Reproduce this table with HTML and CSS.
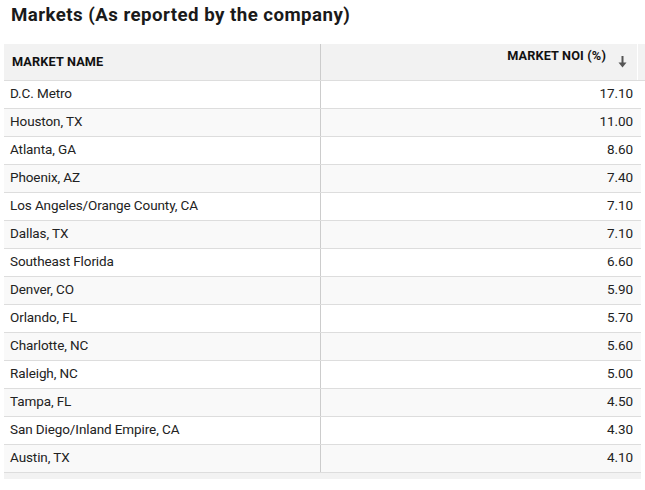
FILE: index.html
```html
<!DOCTYPE html>
<html>
<head>
<meta charset="utf-8">
<link rel="stylesheet" href="styles.css">
</head>
<body>
<div class="page">
  <h2 class="title">Markets (As reported by the company)</h2>
  <div class="grid">
    <div class="head">
      <div class="hcell hname">MARKET NAME</div>
      <div class="hcell hnoi"><span class="hlabel">MARKET NOI (%)</span>
        <svg class="sort" width="9" height="12" viewBox="0 0 9 12"><rect x="3.5" y="0" width="2" height="7" fill="#555"/><path d="M0.5 6.5 L8.5 6.5 L4.5 11.5 Z" fill="#555"/></svg>
      </div>
      <div class="hfill"></div>
    </div>
    <div class="body">
      <div class="row"><div class="cell name">D.C. Metro</div><div class="cell num">17.10</div></div>
      <div class="row"><div class="cell name">Houston, TX</div><div class="cell num">11.00</div></div>
      <div class="row"><div class="cell name">Atlanta, GA</div><div class="cell num">8.60</div></div>
      <div class="row"><div class="cell name">Phoenix, AZ</div><div class="cell num">7.40</div></div>
      <div class="row"><div class="cell name">Los Angeles/Orange County, CA</div><div class="cell num">7.10</div></div>
      <div class="row"><div class="cell name">Dallas, TX</div><div class="cell num">7.10</div></div>
      <div class="row"><div class="cell name">Southeast Florida</div><div class="cell num">6.60</div></div>
      <div class="row"><div class="cell name">Denver, CO</div><div class="cell num">5.90</div></div>
      <div class="row"><div class="cell name">Orlando, FL</div><div class="cell num">5.70</div></div>
      <div class="row"><div class="cell name">Charlotte, NC</div><div class="cell num">5.60</div></div>
      <div class="row"><div class="cell name">Raleigh, NC</div><div class="cell num">5.00</div></div>
      <div class="row"><div class="cell name">Tampa, FL</div><div class="cell num">4.50</div></div>
      <div class="row"><div class="cell name">San Diego/Inland Empire, CA</div><div class="cell num">4.30</div></div>
      <div class="row"><div class="cell name">Austin, TX</div><div class="cell num">4.10</div></div>
    </div>
    <div class="hscroll"></div>
  </div>
</div>
</body>
</html>
```
FILE: styles.css
```css
html, body {
  margin: 0;
  padding: 0;
  background: #fff;
}
body {
  font-family: Roboto, "Liberation Sans", sans-serif;
  color: #222;
}
.page {
  padding: 0 0 0 4px;
}
.title {
  margin: 0;
  padding: 4px 0 0 7px;
  height: 44px;
  box-sizing: border-box;
  font-size: 18.7px;
  letter-spacing: 0.45px;
  font-weight: 700;
  color: #1a1a1a;
  line-height: 22px;
}
.grid {
  width: 641px;
}
.head {
  display: flex;
  height: 37px;
  background: #f2f2f2;
  border-bottom: 1px solid #ddd;
  box-sizing: border-box;
  width: 641px;
}
.hcell {
  font-size: 12.7px;
  font-weight: 700;
  color: #111;
  box-sizing: border-box;
}
.hname {
  width: 317px;
  border-right: 1px solid #ccc;
  display: flex;
  align-items: center;
  padding-left: 8px;
  padding-bottom: 2px;
  letter-spacing: 0.15px;
}
.hnoi {
  width: 317px;
  display: flex;
  justify-content: flex-end;
  align-items: flex-start;
  padding-right: 10px;
  padding-top: 5px;
  letter-spacing: 0.15px;
}
.hlabel {
  line-height: 14px;
  margin-right: 12px;
}
.sort {
  margin-top: 7px;
}
.hfill {
  width: 7px;
  border-left: 1px solid #fff;
}
.body {
  width: 637px;
}
.row {
  display: flex;
  height: 28px;
  border-bottom: 1px solid #ddd;
  box-sizing: border-box;
  font-size: 13.5px;
  letter-spacing: -0.1px;
}
.row:nth-child(even) {
  background: #f9f9f9;
}
.cell {
  display: flex;
  align-items: center;
  box-sizing: border-box;
  padding-bottom: 3px;
}
.name {
  width: 317px;
  border-right: 1px solid #ccc;
  padding-left: 6px;
}
.num {
  flex: 1;
  justify-content: flex-end;
  padding-right: 8px;
}
.hscroll {
  width: 637px;
  height: 6px;
  background: #f2f2f2;
}
```
